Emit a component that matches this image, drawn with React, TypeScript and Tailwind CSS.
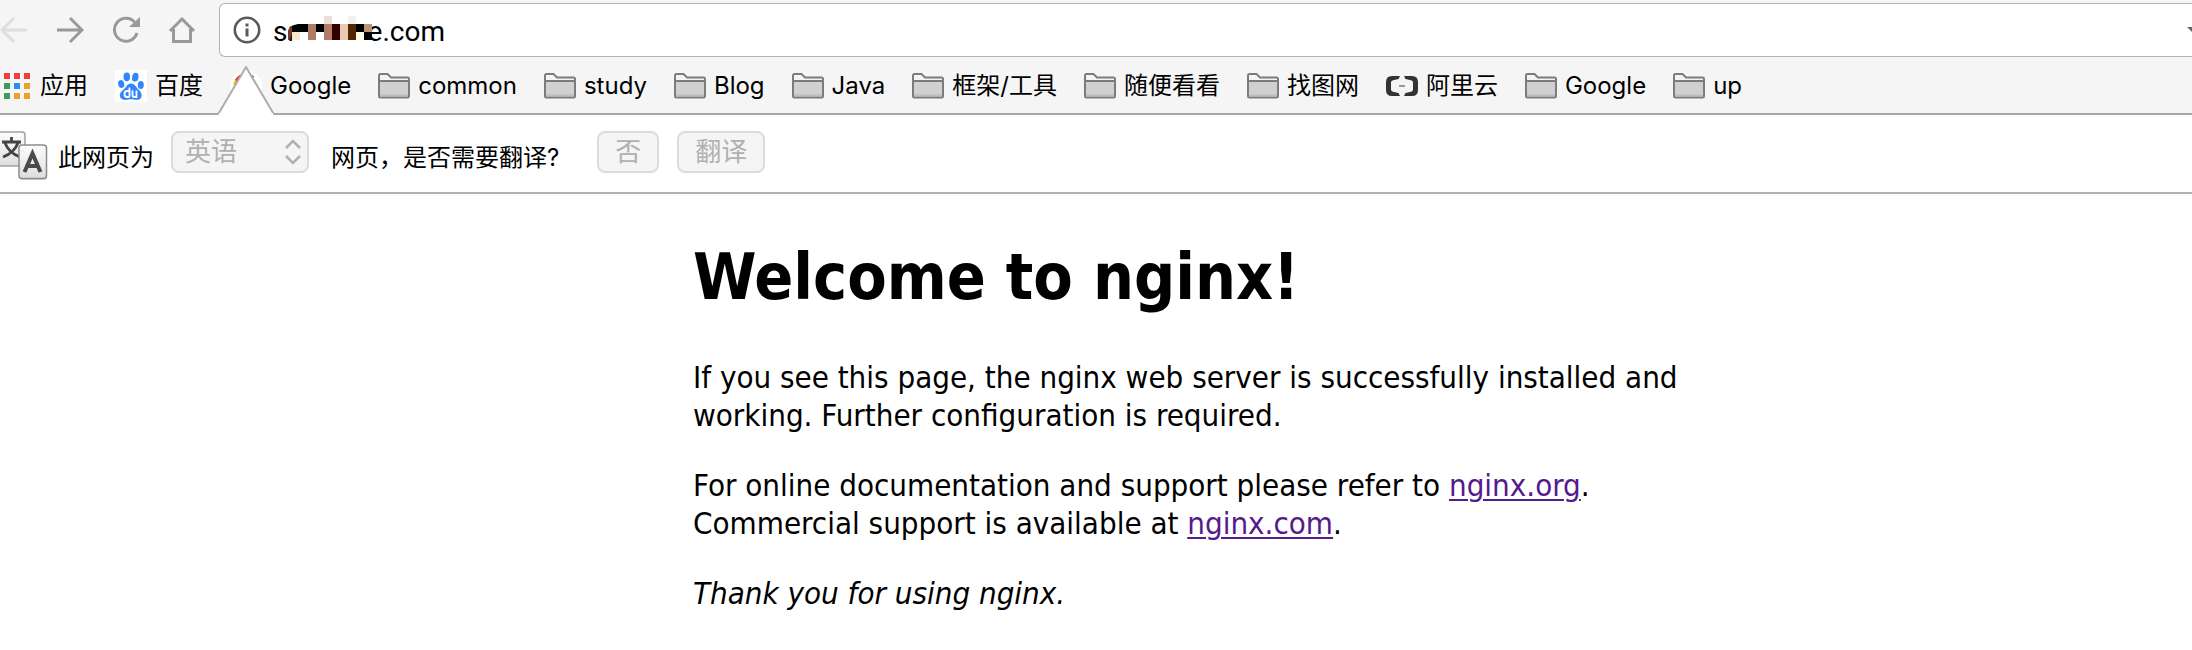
import React from "react";

const Folder = () => (
  <svg width="32" height="26" viewBox="0 0 32 26" aria-hidden="true" className="shrink-0">
    <path d="M1 8V2.500Q1 1 2.500 1H9.500L13 4.500H29.500Q31 4.500 31 6V8Z" fill="#f4f4f4" stroke="#7c7c7c" strokeWidth="2" />
    <path d="M1 8H31V23Q31 24.500 29.500 24.500H2.500Q1 24.500 1 23Z" fill="#d0d0d0" stroke="#7c7c7c" strokeWidth="2" />
    <path d="M2 21.500H30V23.500H2Z" fill="#bdbdbd" />
  </svg>
);

const Apps = () => (
  <svg width="28" height="26" viewBox="0 0 28 26" aria-hidden="true" className="shrink-0">
    {["#f23d3a", "#f23d3a", "#f23d3a", "#3a9c5c", "#2b8cf5", "#f0a029", "#3a9c5c", "#f0a029", "#f0a029"].map((c, i) => (
      <rect key={i} x={(i % 3) * 10} y={Math.floor(i / 3) * 10} width="6" height="6" fill={c} />
    ))}
  </svg>
);

const Baidu = () => (
  <svg width="32" height="32" viewBox="0 0 32 32" aria-hidden="true" className="shrink-0">
    <rect width="32" height="32" fill="#fff" />
    <g fill="#3385ff">
      <ellipse cx="11.800" cy="6.800" rx="3.300" ry="4.400" />
      <ellipse cx="20.300" cy="7.200" rx="3.200" ry="4.400" transform="rotate(10 20.300 7.200)" />
      <ellipse cx="6.200" cy="14" rx="3" ry="4" transform="rotate(-15 6.200 14)" />
      <ellipse cx="25.800" cy="15" rx="3" ry="4" />
      <path d="M16 13.500C20 13.500 21 17.500 24 20C28 23.500 27.500 29.500 22.500 29.800C19.500 30 18 29.300 16 29.300C14 29.300 12 30.200 9 29.800C4 29 3.500 23.500 7.500 20.500C11 18 12 13.500 16 13.500Z" />
    </g>
    <g fill="none" stroke="#fff" strokeWidth="1.800">
      <path d="M14.500 17.500V27M14.500 21H12Q9.500 21 9.500 24T12 27H14.500" />
      <path d="M17.500 20.500V25Q17.500 27 19.500 27H21.500V20.500" />
    </g>
  </svg>
);

const Aliyun = () => (
  <svg width="32" height="20" viewBox="0 0 32 20" aria-hidden="true" className="shrink-0">
    <g fill="#333">
      <path d="M14 0H6Q0 0 0 6V14Q0 20 6 20H14L12.500 17L7 15.800Q5 15.300 5 13.500V6.500Q5 4.700 7 4.200L12.500 3Z" />
      <path d="M18 0H26Q32 0 32 6V14Q32 20 26 20H18L19.500 17L25 15.800Q27 15.300 27 13.500V6.500Q27 4.700 25 4.200L19.500 3Z" />
    </g>
    <path d="M13 9H19V11H13Z" fill="#999" />
  </svg>
);

const GoogleMark = () => (
  <svg width="32" height="32" viewBox="0 0 32 32" aria-hidden="true" className="shrink-0">
    <circle cx="16" cy="16" r="16" fill="#fff" />
    <g fill="none" strokeWidth="4">
      <path d="M6.500 11A11 11 0 0 1 23 8" stroke="#dd3b2c" />
      <path d="M6.500 11A11 11 0 0 0 6 18" stroke="#f4b400" />
      <path d="M24 14A11 11 0 0 1 23 23" stroke="#4285f4" />
    </g>
  </svg>
);

const TranslateMark = () => (
  <svg width="48" height="50" viewBox="0 0 48 50" aria-hidden="true" className="shrink-0">
    <defs>
      <linearGradient id="key" x1="0" y1="0" x2="0" y2="1">
        <stop offset="0" stopColor="#fdfdfd" />
        <stop offset="1" stopColor="#dedede" />
      </linearGradient>
    </defs>
    <rect x="-8" y="1" width="33" height="34" rx="3" fill="url(#key)" stroke="#a0a0a0" strokeWidth="1.500" />
    <path d="M2 11H21M11.500 6V11M5 12Q9 22 20 26M18 12Q14 22 3 26" fill="none" stroke="#444" strokeWidth="2.800" />
    <rect x="19" y="15" width="28" height="34" rx="3" fill="#000" opacity="0.150" />
    <rect x="19" y="14" width="27.500" height="33.500" rx="3" fill="url(#key)" stroke="#8c8c8c" strokeWidth="1.500" />
    <path d="M24.500 41L32.500 22.500L40.500 41M27.500 35H37.500" fill="none" stroke="#4a4a4a" strokeWidth="4" />
  </svg>
);

const bookmarks: { label: string; icon: () => React.JSX.Element }[] = [
  { label: "应用", icon: Apps },
  { label: "百度", icon: Baidu },
  { label: "Google", icon: GoogleMark },
  { label: "common", icon: Folder },
  { label: "study", icon: Folder },
  { label: "Blog", icon: Folder },
  { label: "Java", icon: Folder },
  { label: "框架/工具", icon: Folder },
  { label: "随便看看", icon: Folder },
  { label: "找图网", icon: Folder },
  { label: "阿里云", icon: Aliyun },
  { label: "Google", icon: Folder },
  { label: "up", icon: Folder },
];

const mosaicRows: string[][] = [
  ["none", "none", "none", "none", "#ecdfd5", "none", "none", "#f1f0ee", "none", "none"],
  ["#000", "#000", "#b07c68", "#000", "#b07c68", "#2e0000", "#e8caac", "#4e2800", "#000", "#c09472"],
  ["#f8e6c8", "#fff", "#b07c68", "#fff", "#b07c68", "#2e0000", "#e8caac", "#4e2800", "#fffce6", "#000"],
];

const Mosaic = () => (
  <svg width="84" height="26" viewBox="-4 0 84 26" aria-hidden="true" className="pointer-events-none absolute left-[68px] top-3">
    <path d="M0 8H80V26H0Z" fill="#fff" />
    {mosaicRows.map((row, y) =>
      row.map((c, x) => <rect key={`${y}-${x}`} x={x * 8} y={y * 8} width="8" height="8" fill={c} shapeRendering="crispEdges" />),
    )}
    <path d="M-4 8H6Q0 9 -4 12Z" fill="#fff" />
    <path d="M-4 14L0 10V16L-2 24H-4Z" fill="#7a3b2c" />
  </svg>
);

const Nav = ({ label, color, children }: { label: string; color: string; children: React.ReactNode }) => (
  <button type="button" aria-label={label} className={color}>
    <svg width="28" height="28" viewBox="0 0 28 28" fill="none" stroke="currentColor" strokeWidth="3">
      {children}
    </svg>
  </button>
);

const barButton = "h-[42px] rounded-lg border-2 border-[#dcdcdc] bg-[#f5f5f5] px-4 text-[26px] leading-8 text-[#b0b0b0]";

export default function App() {
  return (
    <div className="min-h-screen bg-white text-black">
      <header className="border-b-2 border-[#a6a6a6] bg-[#f5f5f5]">
        <div className="flex items-center pt-[3px]">
          <nav className="flex w-[219px] shrink-0 gap-7">
            <Nav label="Back" color="text-[#dedede]">
              <path d="M27 14H2M14 2L2 14L14 26" />
            </Nav>
            <Nav label="Forward" color="text-[#999]">
              <path d="M1 14H26M14 2L26 14L14 26" />
            </Nav>
            <Nav label="Reload" color="text-[#999]">
              <path d="M22.500 6A11.500 11.500 0 1 0 25 17" />
              <path d="M28 1V11H17Z" fill="currentColor" stroke="none" />
            </Nav>
            <Nav label="Home" color="text-[#999]">
              <path d="M2 15L14 3L26 15M5.500 13V25.500H22.500V13" />
            </Nav>
          </nav>
          <div className="relative flex h-[54px] flex-1 items-center gap-3 overflow-hidden rounded-l-md border border-r-0 border-[#b4b4b4] bg-white pl-[13px]">
            <svg width="28" height="28" viewBox="0 0 28 28" aria-hidden="true" className="shrink-0">
              <circle cx="14" cy="14" r="12.200" fill="none" stroke="#5a5a5a" strokeWidth="2.600" />
              <path d="M12.500 7.500H15.500V10.500H12.500ZM12.500 12.500H15.500V20.500H12.500Z" fill="#5a5a5a" />
            </svg>
            <input
              aria-label="Address"
              defaultValue={"sm\u00a0\u00a0\u00a0\u00a0\u00a0\u00a0\u00a0\u00a0e.com"}
              className="min-w-0 flex-1 bg-transparent pt-[3px] font-['Roboto',sans-serif] text-[28px] leading-8 outline-none"
            />
            <Mosaic />
            <svg width="5" height="6" viewBox="0 0 5 6" aria-hidden="true" className="shrink-0">
              <path d="M0 0H5V5Z" fill="#666" />
            </svg>
          </div>
        </div>
        <div className="relative flex h-14 items-center gap-[27px] pl-1 pt-px font-['Inter','Noto_Sans_CJK_SC',sans-serif] text-2xl">
          {bookmarks.map(({ label, icon: Icon }, i) => (
            <a key={i} href="#" className="flex shrink-0 items-center gap-2 whitespace-nowrap">
              <Icon />
              {label}
            </a>
          ))}
          <svg width="58" height="50" viewBox="0 0 58 50" aria-hidden="true" className="absolute left-[217px] top-2">
            <path d="M1 50L29 2L57 50Z" fill="#fff" />
            <path d="M1 49.500L29 2L57 49.500" fill="none" stroke="#adadad" strokeWidth="2" strokeLinejoin="round" />
          </svg>
          <span className="absolute left-[219px] top-14 h-0.5 w-[54px] bg-white" />
        </div>
      </header>
      <section className="flex items-start border-b-2 border-[#b0b0b0] pb-[7px] pt-4 font-['Inter','Noto_Sans_CJK_SC',sans-serif] text-2xl">
        <TranslateMark />
        <label htmlFor="lang" className="ml-2.5 leading-[54px]">
          此网页为
        </label>
        <div className="relative ml-[17px]">
          <select
            id="lang"
            disabled
            className="block h-[42px] w-[138px] appearance-none rounded-lg border-2 border-[#dcdcdc] bg-[#f5f5f5] pl-3 text-[26px] leading-8 text-[#b0b0b0] opacity-100"
          >
            <option>英语</option>
          </select>
          <svg width="16" height="26" viewBox="0 0 16 26" aria-hidden="true" className="pointer-events-none absolute right-2 top-2">
            <path d="M1 9L8 2L15 9M1 17L8 24L15 17" fill="none" stroke="#b0b0b0" strokeWidth="2.500" />
          </svg>
        </div>
        <span className="ml-[22px] leading-[54px]">网页，是否需要翻译?</span>
        <button type="button" disabled className={`ml-[38px] ${barButton}`}>
          否
        </button>
        <button type="button" disabled className={`ml-[18px] ${barButton}`}>
          翻译
        </button>
      </section>
      <main className="pl-[693px] pt-11 font-['DejaVu_Sans_Condensed','DejaVu_Sans',sans-serif] text-[31px] leading-[38px]">
        <div className="flex max-w-[1100px] flex-col gap-8">
          <h1 className="mb-2.5 text-[64px] font-bold leading-[78px]">Welcome to nginx!</h1>
          <p>If you see this page, the nginx web server is successfully installed and working. Further configuration is required.</p>
          <p>
            For online documentation and support please refer to{" "}
            <a href="http://nginx.org/" className="text-[#551a8b] underline decoration-2 underline-offset-[3px]">
              nginx.org
            </a>
            .<br />
            Commercial support is available at{" "}
            <a href="http://nginx.com/" className="text-[#551a8b] underline decoration-2 underline-offset-[3px]">
              nginx.com
            </a>
            .
          </p>
          <p>
            <em>Thank you for using nginx.</em>
          </p>
        </div>
      </main>
    </div>
  );
}
